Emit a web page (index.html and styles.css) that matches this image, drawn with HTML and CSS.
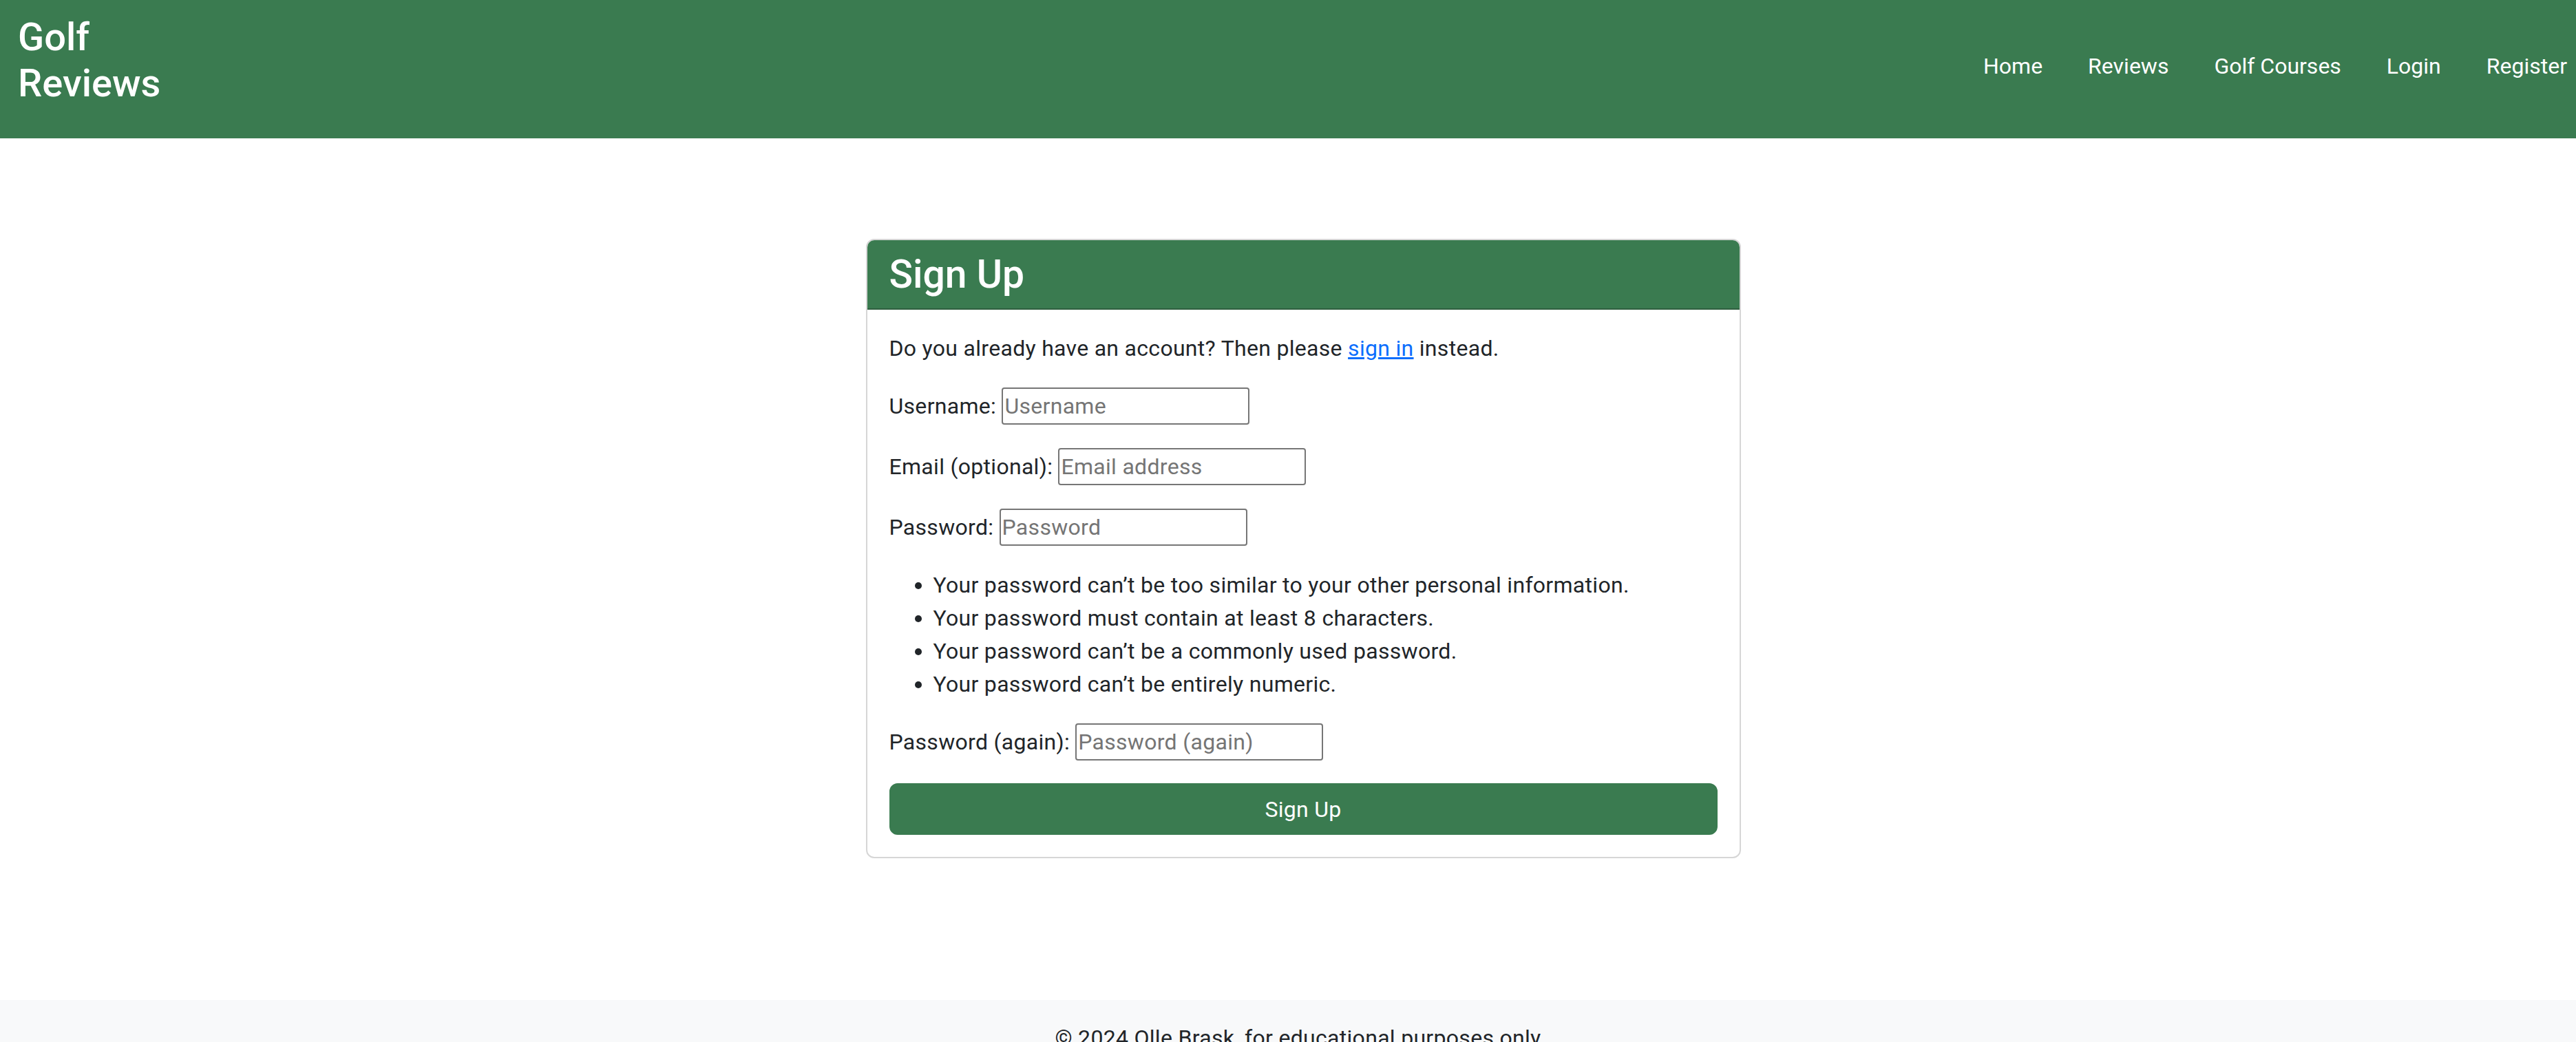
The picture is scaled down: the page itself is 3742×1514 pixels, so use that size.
FILE: index.html
```html
<!DOCTYPE html>
<html lang="en">
<head>
<meta charset="utf-8">
<title>Golf Reviews - Sign Up</title>
<link rel="stylesheet" href="styles.css">
</head>
<body>
<nav class="navbar">
  <a class="brand" href="#">Golf Reviews</a>
  <ul class="nav-links">
    <li><a href="#">Home</a></li>
    <li><a href="#">Reviews</a></li>
    <li><a href="#">Golf Courses</a></li>
    <li><a href="#">Login</a></li>
    <li><a href="#">Register</a></li>
  </ul>
</nav>
<main class="main">
  <section class="card">
    <div class="card-header"><h3 class="card-title">Sign Up</h3></div>
    <div class="card-body">
      <p class="intro">Do you already have an account? Then please <a class="link" href="#">sign in</a> instead.</p>
      <div class="row"><label for="u">Username:</label><input id="u" class="field" type="text" placeholder="Username"></div>
      <div class="row"><label for="e">Email (optional):</label><input id="e" class="field" type="email" placeholder="Email address"></div>
      <div class="row"><label for="p">Password:</label><input id="p" class="field" type="password" placeholder="Password"></div>
      <ul class="help">
        <li>Your password can’t be too similar to your other personal information.</li>
        <li>Your password must contain at least 8 characters.</li>
        <li>Your password can’t be a commonly used password.</li>
        <li>Your password can’t be entirely numeric.</li>
      </ul>
      <div class="row"><label for="p2">Password (again):</label><input id="p2" class="field" type="password" placeholder="Password (again)"></div>
      <button class="btn" type="submit">Sign Up</button>
    </div>
  </section>
</main>
<footer class="footer">
  <p class="footer-text">© 2024 Olle Brask, for educational purposes only.</p>
</footer>
</body>
</html>
```

FILE: styles.css
```css
* { box-sizing: border-box; }
html, body { margin: 0; padding: 0; }
body {
  font-family: Roboto, "Liberation Sans", Arial, sans-serif;
  font-size: 32px;
  line-height: 48px;
  letter-spacing: 0.3px;
  color: #212529;
  background: #ffffff;
}
.navbar {
  height: 201px;
  background: #3a7b50;
  display: flex;
  align-items: center;
  justify-content: space-between;
  padding: 0 13px 0 26px;
}
.brand {
  width: min-content;
  color: #ffffff;
  text-decoration: none;
  font-size: 56px;
  line-height: 67px;
  font-weight: 500;
  letter-spacing: 0;
  align-self: flex-start;
  margin-top: 21px;
}
.nav-links {
  list-style: none;
  margin: 0;
  padding: 0 0 10px;
  display: flex;
  gap: 66px;
  letter-spacing: 0;
}
.nav-links a {
  color: #ffffff;
  text-decoration: none;
  font-size: 32px;
  line-height: 48px;
}
.main {
  display: flex;
  justify-content: center;
  padding: 146px 0 206px 44px;
}
.card {
  width: 1271px;
  border: 2px solid #d6d6d6;
  border-radius: 12px;
  overflow: hidden;
  background: #ffffff;
}
.card-header {
  background: #3a7b50;
  border-bottom: 2px solid #305f40;
  padding: 16px 32px;
}
.card-title {
  margin: 0;
  color: #ffffff;
  font-size: 57px;
  line-height: 67px;
  font-weight: 500;
  letter-spacing: 0;
}
.card-body {
  padding: 32px 32px 32px;
}
.intro { margin: 0 0 32px; }
.link { color: #0d6efd; text-decoration: underline; }
.row {
  display: flex;
  align-items: center;
  height: 56px;
  margin-bottom: 32px;
  white-space: pre;
}
.row label::after { content: " "; }
.field {
  width: 360px;
  height: 54px;
  border: 2px solid #767676;
  border-radius: 4px;
  padding: 0 2px;
  font-family: inherit;
  font-size: 32px;
  letter-spacing: 0.3px;
  color: #212529;
  background: #ffffff;
}
.field::placeholder { color: #757575; }
.help {
  margin: 0 0 32px;
  padding-left: 64px;
}
.btn {
  display: block;
  width: 100%;
  height: 75px;
  border: 2px solid #3a7b50;
  border-radius: 12px;
  background: #3a7b50;
  color: #ffffff;
  font-family: inherit;
  font-size: 32px;
  line-height: 48px;
  letter-spacing: 0.3px;
}
.footer {
  background: #f8f9fa;
  padding: 31px 0 31px 36px;
  text-align: center;
}
.footer-text { margin: 0; }
```
